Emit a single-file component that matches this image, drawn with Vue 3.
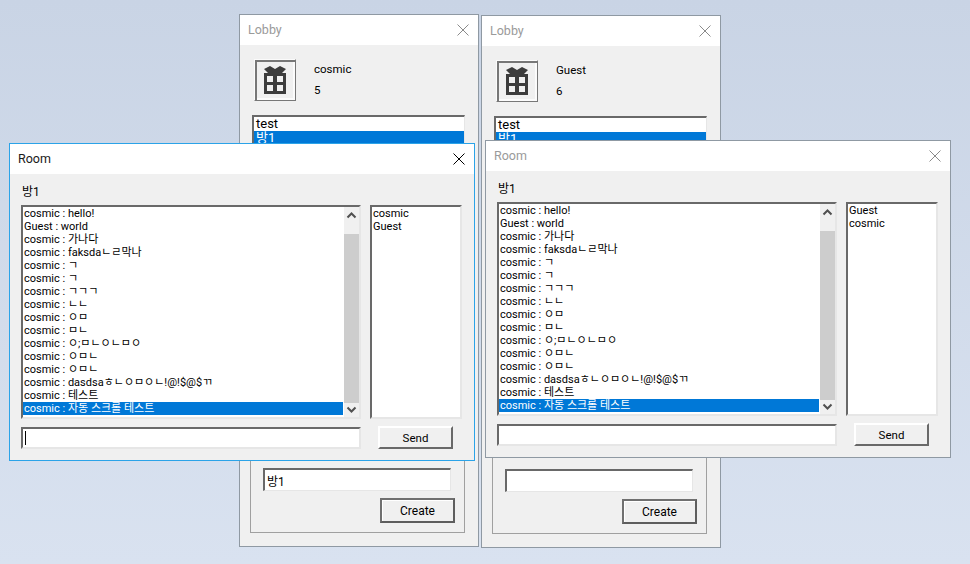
<script setup>
const chat = [
  ['cosmic', 'hello!'],
  ['Guest', 'world'],
  ['cosmic', '가나다'],
  ['cosmic', 'faksdaㄴㄹ막나'],
  ['cosmic', 'ㄱ'],
  ['cosmic', 'ㄱ'],
  ['cosmic', 'ㄱㄱㄱ'],
  ['cosmic', 'ㄴㄴ'],
  ['cosmic', 'ㅇㅁ'],
  ['cosmic', 'ㅁㄴ'],
  ['cosmic', 'ㅇ;ㅁㄴㅇㄴㅁㅇ'],
  ['cosmic', 'ㅇㅁㄴ'],
  ['cosmic', 'ㅇㅁㄴ'],
  ['cosmic', 'dasdsaㅎㄴㅇㅁㅇㄴ!@!$@$ㄲ'],
  ['cosmic', '테스트'],
  ['cosmic', '자동 스크롤 테스트'],
]

const lobbies = [
  { id: 'l1', name: 'cosmic', num: 5, room: '방1' },
  { id: 'l2', name: 'Guest', num: 6, room: '' },
]

const rooms = [
  { id: 'r1', users: ['cosmic', 'Guest'], active: true },
  { id: 'r2', users: ['Guest', 'cosmic'], active: false },
]
</script>

<template>
  <div class="desktop">
    <div v-for="l in lobbies" :key="l.id" class="win lobby" :class="l.id">
      <div class="title">
        <span>Lobby</span>
        <svg class="close" width="12" height="12" viewBox="0 0 12 12"><path d="M.5.5l11 11M11.5.5l-11 11" stroke="currentColor" fill="none" /></svg>
      </div>
      <div class="lobby-body">
        <div class="profile">
          <div class="icon-btn">
            <svg width="32" height="32" viewBox="0 0 32 32">
              <path d="M5 5l6-3 5 3 5-3 6 3-4 4H9z" fill="#3c3c3c" />
              <path d="M5 9h22v21H5z" fill="#3c3c3c" />
              <path d="M8 12h6v6H8zM18 12h6v6h-6zM8 21h6v6H8zM18 21h6v6h-6z" fill="#f0f0f0" />
            </svg>
          </div>
          <div class="who">
            <div>{{ l.name }}</div>
            <div>{{ l.num }}</div>
          </div>
        </div>
        <div class="sunken room-list">
          <div class="rl-row">test</div>
          <div class="rl-row sel">방1</div>
        </div>
        <div class="group">
          <input class="sunken room-name" :value="l.room" readonly />
          <button class="btn create">Create</button>
        </div>
      </div>
    </div>

    <div v-for="r in rooms" :key="r.id" class="win room" :class="[r.id, { active: r.active }]">
      <div class="title">
        <span>Room</span>
        <svg class="close" width="12" height="12" viewBox="0 0 12 12"><path d="M.5.5l11 11M11.5.5l-11 11" stroke="currentColor" fill="none" /></svg>
      </div>
      <div class="room-body">
        <div class="room-label">방1</div>
        <div class="room-grid">
          <div class="sunken chat">
            <div class="chat-rows">
              <div v-for="(m, i) in chat" :key="i" class="row" :class="{ sel: i === chat.length - 1 }">{{ m[0] }} : {{ m[1] }}</div>
            </div>
            <div class="scroll">
              <svg width="15" height="17" viewBox="0 0 15 17"><path d="M3.5 10.5l4-4 4 4" stroke="#505050" stroke-width="2" fill="none" /></svg>
              <div class="thumb"></div>
              <svg width="15" height="14" viewBox="0 0 15 14"><path d="M3.5 4.5l4 4 4-4" stroke="#505050" stroke-width="2" fill="none" /></svg>
            </div>
          </div>
          <div class="sunken users">
            <div v-for="u in r.users" :key="u" class="row">{{ u }}</div>
          </div>
          <div class="sunken msg"><span v-if="r.active" class="caret"></span></div>
          <div class="send-cell"><button class="btn send">Send</button></div>
        </div>
      </div>
    </div>
  </div>
</template>

<style>
html, body {
  margin: 0;
  overflow: hidden;
}
</style>

<style scoped>
.desktop {
  position: relative;
  width: 970px;
  height: 564px;
  overflow: hidden;
  background: linear-gradient(#c9d4e5, #d9e2f0);
  font-family: Roboto, "Noto Sans CJK KR", sans-serif;
  font-size: 12px;
  color: #000;
}

/* windows sit on a free desktop */
.win {
  position: absolute;
  box-sizing: border-box;
  display: flex;
  flex-direction: column;
  background: #f0f0f0;
  border: 1px solid #8f99a3;
}
.l1 { left: 239px; top: 14px; }
.l2 { left: 481px; top: 15px; }
.r1 { left: 9px; top: 143px; }
.r2 { left: 485px; top: 140px; }

.title {
  height: 30px;
  box-sizing: border-box;
  flex: none;
  display: flex;
  align-items: center;
  justify-content: space-between;
  padding: 0 9px 1px 8px;
  background: #fff;
  color: #9a9a9a;
  font-size: 12.5px;
}
.close {
  color: #8a8a8a;
}
.active {
  border-color: #2ba3e8;
}
.active .title {
  color: #1a1a1a;
}
.active .close {
  color: #000;
}

.lobby {
  width: 240px;
  height: 533px;
}
.lobby-body {
  flex: 1;
  display: flex;
  flex-direction: column;
  padding: 14px 13px 13px 10px;
}
.profile {
  display: flex;
  align-items: center;
  margin-left: 4px;
  height: 42px;
}
.icon-btn {
  box-sizing: border-box;
  width: 42px;
  height: 42px;
  display: flex;
  align-items: center;
  justify-content: center;
  border: 1px solid;
  border-color: #fbfbfb #777 #777 #fbfbfb;
  box-shadow: inset 2px 2px 0 #777, inset -2px -2px 0 #fbfbfb;
}
.who {
  margin-left: 18px;
  margin-top: -2px;
  display: flex;
  flex-direction: column;
  gap: 7px;
  line-height: 14px;
  font-size: 11.5px;
}

.sunken {
  box-sizing: border-box;
  background: #fff;
  border: 2px solid;
  border-color: #696969 #e6e6e6 #e6e6e6 #696969;
}
.room-list {
  margin: 14px 0 0 2px;
  height: 300px;
  font-size: 13px;
  border-right-width: 1px;
  border-bottom-width: 1px;
}
.rl-row {
  height: 14px;
  line-height: 14px;
  padding-left: 2px;
}
.sel {
  background: #0078d7;
  color: #fff;
}
.group {
  flex: 1;
  margin-top: 10px;
  border: 1px solid #a0a0a0;
  display: flex;
  flex-direction: column;
  align-items: flex-start;
  justify-content: flex-end;
  padding: 0 9px 9px 12px;
}
.room-name {
  width: 188px;
  height: 23px;
  padding: 0 0 0 2px;
  outline: none;
  font: inherit;
  border-width: 2px 1px 1px 2px;
}
.btn {
  box-sizing: border-box;
  padding: 0;
  background: #f0f0f0;
  font: inherit;
  color: #000;
  border: 2px solid;
  border-color: #fff #696969 #696969 #fff;
}
.create {
  align-self: flex-end;
  width: 75px;
  height: 25px;
  margin-top: 7px;
  border-color: #707070 #5e5e5e #5e5e5e #707070;
  box-shadow: inset 1px 1px 0 #fff;
}

.room {
  width: 466px;
  height: 318px;
}
.room-body {
  padding: 11px 0 0 11px;
}
.room-label {
  height: 13px;
  line-height: 13px;
  margin: 1px 0 6px 1px;
}
.room-grid {
  display: grid;
  grid-template-columns: 340px 92px;
  grid-template-rows: 214px 22px;
  column-gap: 9px;
  row-gap: 8px;
}
.chat {
  display: flex;
}
.chat-rows {
  flex: 1;
  min-width: 0;
}
.row {
  height: 13px;
  line-height: 13px;
  padding-left: 1px;
  white-space: nowrap;
  font-size: 11px;
}
.scroll {
  width: 15px;
  flex: none;
  margin-left: 1px;
  display: flex;
  flex-direction: column;
  background: #f0f0f0;
}
.scroll svg {
  flex: none;
}
.thumb {
  flex: 1;
  margin-top: 10px;
  background: #cdcdcd;
}
.msg {
  display: flex;
  align-items: center;
  padding-left: 2px;
}
.caret {
  width: 1px;
  height: 14px;
  background: #000;
}
.send-cell {
  padding-left: 8px;
  margin-top: -1px;
}
.send {
  width: 75px;
  height: 23px;
  font-size: 11.5px;
}
</style>
